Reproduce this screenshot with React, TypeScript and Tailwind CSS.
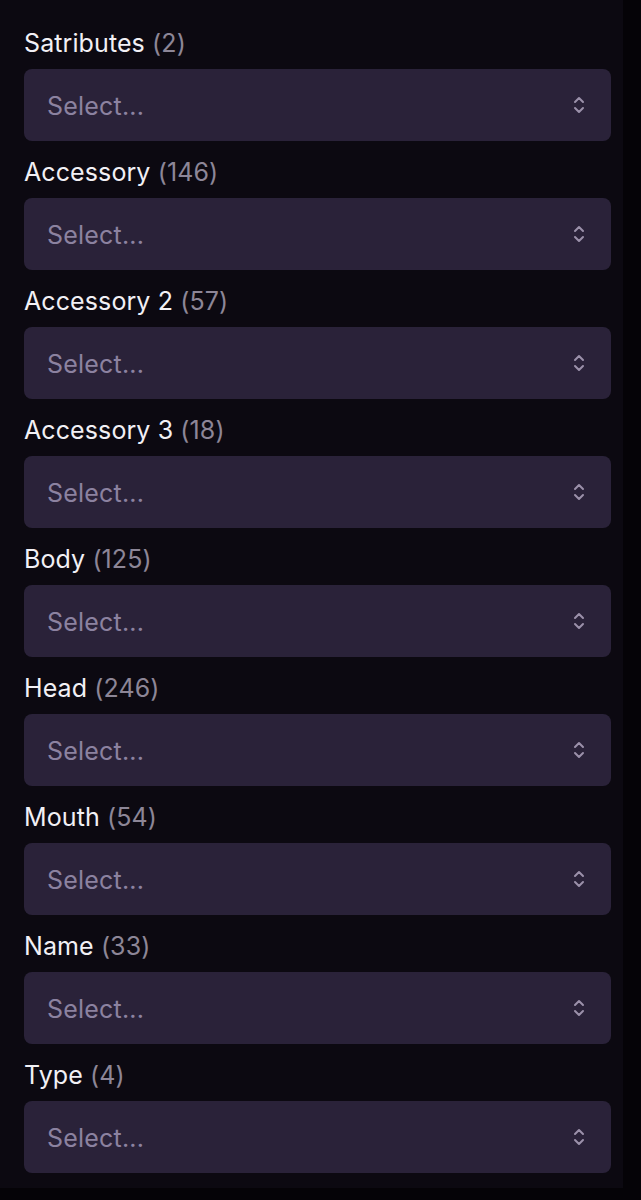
import React from "react";

// Trait filter list: one label + select per attribute.
const TRAITS: { name: string; count: number }[] = [
  { name: "Satributes", count: 2 },
  { name: "Accessory", count: 146 },
  { name: "Accessory 2", count: 57 },
  { name: "Accessory 3", count: 18 },
  { name: "Body", count: 125 },
  { name: "Head", count: 246 },
  { name: "Mouth", count: 54 },
  { name: "Name", count: 33 },
  { name: "Type", count: 4 },
];

function UpDownIcon() {
  return (
    <svg
      width="16"
      height="22"
      viewBox="0 0 16 22"
      fill="none"
      stroke="#9b91aa"
      strokeWidth="2"
      strokeLinecap="round"
      strokeLinejoin="round"
      aria-hidden="true"
    >
      <path d="M4 8l4-4 4 4" />
      <path d="M4 14l4 4 4-4" />
    </svg>
  );
}

function TraitSelect({ name, count }: { name: string; count: number }) {
  return (
    <div className="flex flex-col">
      <label className="text-[25px] leading-[32px] tracking-[0.1px] text-[#f2f0f5]">
        {name} <span className="text-[#8d8697]">({count})</span>
      </label>
      <button
        type="button"
        className="mt-[10px] flex h-[72px] w-full items-center justify-between rounded-[8px] bg-[#2a2239] pl-[23px] pr-[24px] text-left"
      >
        <span className="pt-[3px] text-[25px] tracking-[0.2px] text-[#8c82a0]">Select...</span>
        <UpDownIcon />
      </button>
    </div>
  );
}

export default function App() {
  return (
    <div className="min-h-[1200px] w-[641px] bg-[#050307]">
      <div
        className="flex w-[623px] flex-col gap-[15px] bg-[#0c0911] pb-[15px] pl-[24px] pr-[12px] pt-[27px]"
        style={{ fontFamily: "Inter, 'Liberation Sans', sans-serif" }}
      >
        {TRAITS.map((t) => (
          <TraitSelect key={t.name} name={t.name} count={t.count} />
        ))}
      </div>
    </div>
  );
}
